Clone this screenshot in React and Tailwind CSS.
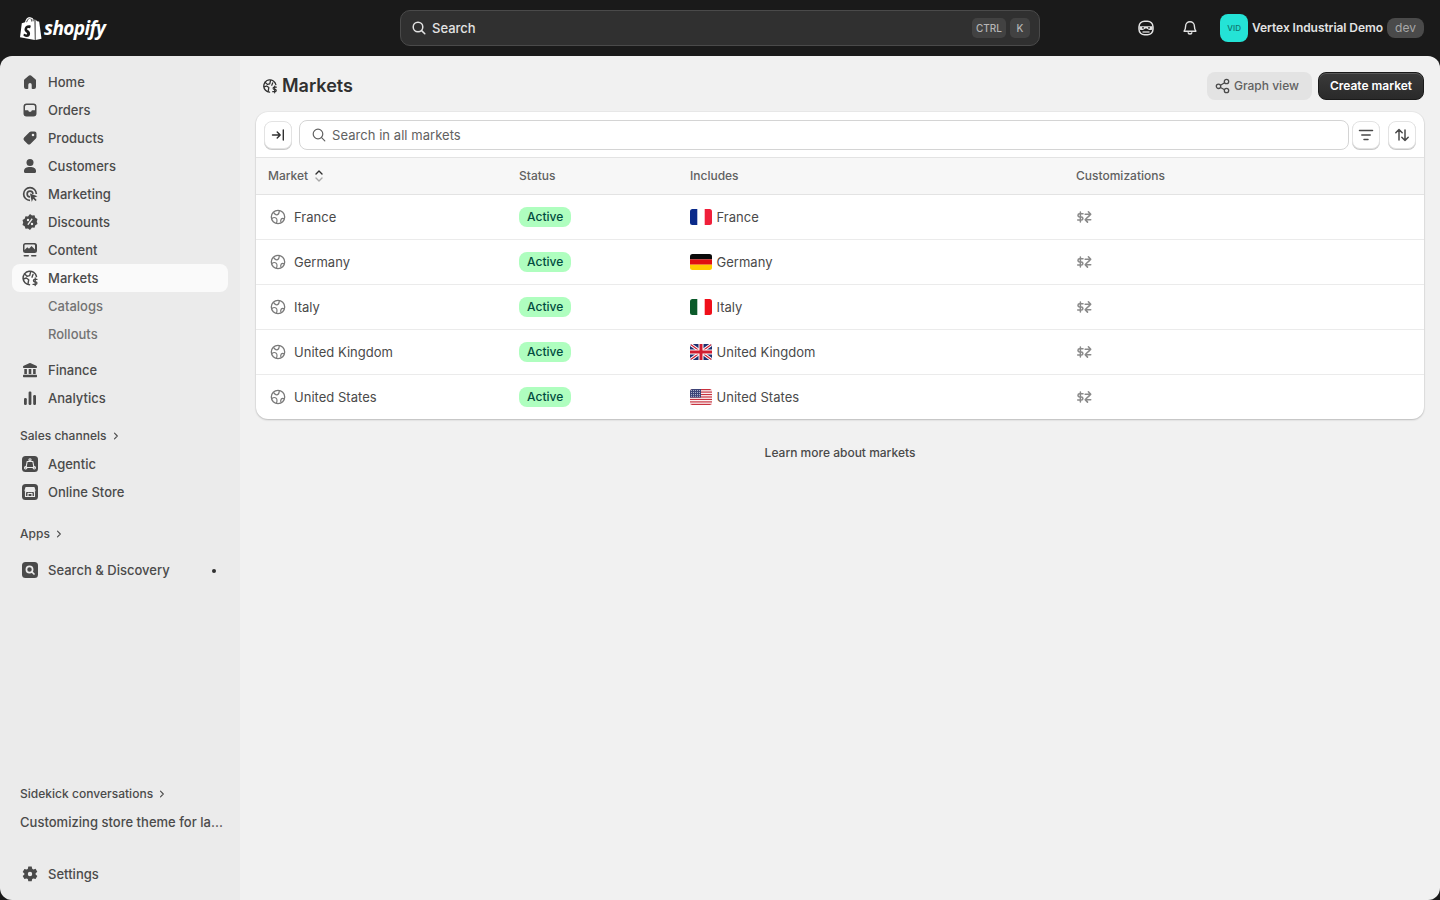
import React from "react";

const I = ({ children, className = "", size = 20, vb = "0 0 20 20" }) => (
  <svg width={size} height={size} viewBox={vb} className={"shrink-0 " + className} fill="currentColor">{children}</svg>
);

const Home = () => <I><path d="M9 3.600a1.600 1.600 0 0 1 2 0l4.400 3.600c.4.300.6.800.6 1.300V15a2 2 0 0 1-2 2h-1.500a.8.800 0 0 1-.8-.8v-3.400a1.700 1.700 0 0 0-3.400 0v3.400a.8.800 0 0 1-.8.800H6a2 2 0 0 1-2-2V8.500c0-.5.200-1 .6-1.300z" /></I>;
const Orders = () => <I><path fillRule="evenodd" d="M6.500 3.500h7a3 3 0 0 1 3 3v7a3 3 0 0 1-3 3h-7a3 3 0 0 1-3-3v-7a3 3 0 0 1 3-3M5 6.500v3.700h2.500c.7 0 1 .4 1.200 1l.2.500h2.200l.2-.5c.2-.6.500-1 1.200-1H15V6.500A1.500 1.500 0 0 0 13.500 5h-7A1.500 1.500 0 0 0 5 6.500" /></I>;
const Products = () => <I><path fillRule="evenodd" d="M11 3.500h3.500a2 2 0 0 1 2 2V9c0 .5-.2 1-.6 1.400l-5.500 5.500a2 2 0 0 1-2.800 0l-3.500-3.500a2 2 0 0 1 0-2.800l5.500-5.500c.4-.4.900-.6 1.400-.6m2 4.800a1.300 1.300 0 1 0 0-2.600 1.300 1.300 0 0 0 0 2.600" /></I>;
const Customers = () => <I><circle cx="10" cy="6.500" r="3.500" /><path d="M4 15c0-2.600 2.400-4 6-4s6 1.400 6 4v.5a1.500 1.500 0 0 1-1.500 1.500h-9A1.500 1.500 0 0 1 4 15.500z" /></I>;
const Marketing = () => <I>
  <path d="M10 2.800a7.200 7.200 0 0 1 7.200 7.200h-1.700A5.500 5.500 0 1 0 10 15.500v1.700a7.200 7.200 0 0 1 0-14.400" />
  <path d="M10 6.300A3.700 3.700 0 0 1 13.700 10H12a2 2 0 1 0-2 2v1.700a3.700 3.700 0 0 1 0-7.400" />
  <path d="m10 9.500 7.500 2.700-3.200 1.300 2.400 2.400-1.200 1.200-2.400-2.400-1.300 3.200z" />
</I>;
const Discounts = () => <I><path fillRule="evenodd" d="m10 2 2 1.500 2.500-.2.800 2.400 2.200 1.300-.7 2.500.7 2.500-2.200 1.300-.8 2.400-2.500-.2L10 18l-2-1.500-2.500.2-.8-2.400-2.200-1.300.7-2.500-.7-2.500 2.200-1.300.8-2.400 2.500.2zM8 6.800a1.200 1.200 0 1 0 0 2.400 1.200 1.200 0 0 0 0-2.400m4 4a1.200 1.200 0 1 0 0 2.400 1.200 1.200 0 0 0 0-2.400m.700-3.500-1-1-4.400 5.900 1 1z" /></I>;
const Content = () => <I><path fillRule="evenodd" d="M5.500 3h9A2.500 2.500 0 0 1 17 5.500v5a2.500 2.500 0 0 1-2.500 2.500h-9A2.500 2.500 0 0 1 3 10.500v-5A2.500 2.500 0 0 1 5.500 3m-1 7 2.800-2.800 1.700 1.600 2.500-2.800 3.500 3.500V5.500a1 1 0 0 0-1-1h-8.500a1 1 0 0 0-1 1z" /><rect x="3.500" y="15" width="5.500" height="1.600" rx=".8" /><rect x="11" y="15" width="5.500" height="1.600" rx=".8" /></I>;
const Globe = ({ size = 20 }) => (
  <svg width={size} height={size} viewBox="0 0 20 20" fill="none" stroke="currentColor" className="shrink-0">
    <path strokeWidth="1.500" strokeLinecap="round" d="M16.500 8.500A6.800 6.800 0 1 0 9.500 16.800" />
    <path strokeWidth="1.400" strokeLinecap="round" strokeLinejoin="round" d="M4.500 5.800 7 8.200l2.700-.6.900-3.700M3.500 11l2.800-1 2.400 1.800-.7 3.800M13 6.500l-1 2.700" />
    <path strokeWidth="1.300" strokeLinecap="round" strokeLinejoin="round" d="M17 11.300h-2.300a1.200 1.200 0 0 0 0 2.500h1a1.200 1.200 0 0 1 0 2.500H13M15.200 10v7.600" />
  </svg>
);
const Finance = () => <I><path d="M9.200 3.200a2 2 0 0 1 1.600 0l5.500 2.600c.5.200.7.600.7 1v.5c0 .4-.3.700-.7.700H3.700a.7.700 0 0 1-.7-.7v-.5c0-.4.200-.8.700-1z" /><rect x="4.300" y="9" width="2.600" height="5" /><rect x="8.700" y="9" width="2.600" height="5" /><rect x="13.100" y="9" width="2.600" height="5" /><rect x="3" y="14.800" width="14" height="2.400" rx=".6" /></I>;
const Analytics = () => <I><rect x="4" y="10" width="2.800" height="7" rx="1.200" /><rect x="8.600" y="3.500" width="2.800" height="13.500" rx="1.200" /><rect x="13.200" y="7" width="2.800" height="10" rx="1.200" /></I>;
const Settings = () => <I><path fillRule="evenodd" d="M8.300 2.500h3.400l.5 2.200 1.200.7 2.200-.7 1.700 3-1.700 1.500v1.400l1.700 1.500-1.700 3-2.200-.7-1.200.7-.5 2.200H8.300l-.5-2.200-1.200-.7-2.200.7-1.700-3 1.700-1.500V9.400L2.700 7.900l1.700-3 2.200.7 1.200-.7zM10 12.200a2.200 2.200 0 1 0 0-4.400 2.200 2.200 0 0 0 0 4.400" /></I>;
const AppTile = ({ children }) => (
  <svg width="16" height="16" viewBox="0 0 16 16" className="shrink-0"><rect width="16" height="16" rx="3.500" fill="#4a4a4a" />{children}</svg>
);
const Agentic = () => <AppTile><g fill="none" stroke="#ebebeb" strokeWidth="1.100"><path d="M5.200 5.500h5.600l1.200 6H4z" /><circle cx="8" cy="3.800" r="1.100" /><circle cx="3.700" cy="11.800" r="1.200" /><circle cx="12.300" cy="11.800" r="1.200" /></g></AppTile>;
const Store = () => <AppTile><g fill="none" stroke="#ebebeb" strokeWidth="1.100"><path d="M3.500 7.500v5h9v-5" /><path d="M4 3.500h8l1 3a1.400 1.400 0 0 1-2.500.6 1.700 1.700 0 0 1-2.500 0 1.700 1.700 0 0 1-2.500 0A1.400 1.400 0 0 1 3 6.500z" fill="#ebebeb" /><path d="M6 12.500V9.500h4v3" /></g></AppTile>;
const SearchTile = () => <AppTile><circle cx="7.500" cy="7.500" r="3.100" fill="none" stroke="#ebebeb" strokeWidth="1.700" /><path d="m10 10 2 2" stroke="#ebebeb" strokeWidth="1.700" strokeLinecap="round" /></AppTile>;

const Mag = ({ size = 16, w = 1.500 }) => (
  <svg width={size} height={size} viewBox="0 0 16 16" fill="none" stroke="currentColor" strokeWidth={w} strokeLinecap="round" className="shrink-0"><circle cx="7" cy="7" r="4.800" /><path d="m10.600 10.600 3.200 3.200" /></svg>
);
const Chev = () => (
  <svg width="8" height="8" viewBox="0 0 8 8" fill="none" stroke="currentColor" strokeWidth="1.100" strokeLinecap="round" strokeLinejoin="round" className="shrink-0"><path d="m2.500 1.200 2.800 2.800-2.800 2.800" /></svg>
);

const NavItem = ({ icon, label, active, dot }) => (
  <div className={"h-7 flex items-center rounded-lg pl-2 pr-3 " + (active ? "bg-[#fafafa]" : "")}>
    <span className="w-5 h-5 flex items-center justify-center text-[#4a4a4a]">{icon}</span>
    <span className="ml-2 pt-[2px] text-[13px] font-[450] tracking-[0.02px] text-[#4a4a4a]">{label}</span>
    {dot && <span className="ml-auto mt-[2px] w-1 h-1 rounded-full bg-[#303030]" />}
  </div>
);
const SubItem = ({ label }) => (
  <div className="h-7 flex items-center pl-9 pt-[2px] text-[13px] font-[450] text-[#737373]">{label}</div>
);
const SectionHead = ({ label }) => (
  <div className="h-7 flex items-center gap-[5px] pl-2 text-[12px] font-[450] tracking-[0.02px] text-[#4a4a4a]">{label}<Chev /></div>
);

const FlagWrap = ({ children }) => (
  <svg width="22" height="16" viewBox="0 0 22 16" className="shrink-0"><defs><clipPath id="fc"><rect width="22" height="16" rx="2.500" /></clipPath></defs><g clipPath="url(#fc)">{children}</g></svg>
);
const Fr = () => <FlagWrap><rect width="22" height="16" fill="#fff" /><rect width="7.300" height="16" fill="#0a2a8a" /><rect x="14.700" width="7.300" height="16" fill="#f01f3a" /></FlagWrap>;
const De = () => <FlagWrap><rect width="22" height="5.400" fill="#0a0a0a" /><rect y="5.400" width="22" height="5.300" fill="#e01010" /><rect y="10.700" width="22" height="5.300" fill="#ffcc00" /></FlagWrap>;
const It = () => <FlagWrap><rect width="22" height="16" fill="#fff" /><rect width="7.300" height="16" fill="#0b5a2a" /><rect x="14.700" width="7.300" height="16" fill="#f00f1a" /></FlagWrap>;
const Uk = () => <FlagWrap><rect width="22" height="16" fill="#1f2f6f" /><path d="M0 0l22 16M22 0 0 16" stroke="#fff" strokeWidth="3.200" /><path d="M0 0l22 16M22 0 0 16" stroke="#d01c30" strokeWidth="1.200" /><path d="M11 0v16M0 8h22" stroke="#fff" strokeWidth="5" /><path d="M11 0v16M0 8h22" stroke="#d01c30" strokeWidth="3" /></FlagWrap>;
const Us = () => <FlagWrap><rect width="22" height="16" fill="#fff" />{[0, 2.460, 4.920, 7.380, 9.840, 12.300, 14.760].map((y) => <rect key={y} y={y} width="22" height="1.230" fill="#c8323f" />)}<rect width="11" height="8.600" fill="#3d4478" /><path d="M1 1.500h9M1 3.500h9M1 5.500h9M1 7.300h9" stroke="#c9cce0" strokeWidth=".8" strokeDasharray="1 1" /></FlagWrap>;

const RowGlobe = () => (
  <svg width="16" height="16" viewBox="0 0 16 16" fill="none" stroke="#7a7a7a" className="shrink-0"><circle cx="8" cy="8" r="6.700" strokeWidth="1.300" /><path d="M3.400 3.400c1 1.500 2.200 2.600 3.600 2.400 1.500-.2 2.200-2 2.300-4.200M1.600 9.800c1.500-1.200 3-1.700 4.300-.9 1.300.8 1.300 2.900.6 5.300M14.300 9.800c-1.200-.7-2.300-.6-3 .2-.7.800-.7 2.200-.4 3.400" strokeWidth="1.200" /></svg>
);
const Custom = () => (
  <svg width="16" height="16" viewBox="0 0 16 16" fill="none" stroke="#8a8a8a" strokeLinecap="round" strokeLinejoin="round" className="shrink-0">
    <path d="M7 4.700H3.600a1.600 1.600 0 0 0 0 3.200h1.700a1.600 1.600 0 0 1 0 3.200H1.700M4.400 3v10" strokeWidth="1.500" />
    <path d="M9.200 5.200h5.400M12.400 2.800l2.300 2.400-2.300 2.400M14.700 10.700H9.300M11.500 8.300l-2.300 2.400 2.300 2.400" strokeWidth="1.600" />
  </svg>
);

const COLS = "grid grid-cols-[251px_171px_386.500px_1fr] items-center";
const rows = [
  ["France", <Fr />],
  ["Germany", <De />],
  ["Italy", <It />],
  ["United Kingdom", <Uk />],
  ["United States", <Us />],
];

const Row = ({ name, flag, last }) => (
  <div className={COLS + " pl-3 text-[13px] tracking-[0.02px] text-[#4a4a4a] " + (last ? "h-[44px]" : "h-[45px] border-b border-[#ebebeb]")}>
    <div className="flex items-center gap-2 pl-[2px]"><RowGlobe /><span className="pt-[2px]">{name}</span></div>
    <div><span className="inline-flex items-center h-5 px-2 mb-[1px] rounded-lg bg-[#affebf] text-[12px] font-[550] text-[#014b40]">Active</span></div>
    <div className="flex items-center gap-[4.500px]">{flag}<span className="pt-[2px]">{name}</span></div>
    <div className="ml-[-1px]"><Custom /></div>
  </div>
);

const IconBtn = ({ children, className = "" }) => (
  <div className={"w-7 h-7 flex items-center justify-center rounded-lg bg-white border border-[#e3e3e3] shadow-[0_1px_0_#c9c9c9] text-[#303030] " + className}>{children}</div>
);

export default function App() {
  return (
    <div className="h-[900px] bg-[#1a1a1a] flex flex-col overflow-hidden font-['Inter',sans-serif]">
      <header className="h-14 shrink-0 grid grid-cols-[400px_640px_1fr] items-center">
        <div className="flex items-center pl-5">
          <svg width="22" height="25" viewBox="0 0 22 25" className="shrink-0">
            <path fill="#fff" d="M1.800 7.200 5 6.200C5.600 3.400 7.300 1 9.600 1c.5 0 .9.200 1.300.5 1.200 0 2.100.9 2.600 2.300l1-.3L14.800 24 0 21.300z" />
            <path fill="#fff" d="M15.500 3.600 17.100 5.200l1.800.2.300.3L21.500 22.700 15.600 24z" />
            <path fill="#1a1a1a" d="M10.900 9.800 10.100 12.300s-.8-.4-1.700-.4c-1.400 0-1.400.9-1.400 1.100 0 1.200 3.100 1.600 3.100 4.400 0 2.200-1.400 3.600-3.300 3.600-2.200 0-3.400-1.400-3.400-1.400l.6-2s1.200 1 2.200 1c.6 0 .9-.5.900-.9 0-1.500-2.600-1.600-2.600-4.200 0-2.100 1.500-4.200 4.600-4.200 1.200 0 1.700.5 1.700.5Z" />
            <path d="M6.600 6.200C7.200 4.300 8.400 2.600 9.600 2.200M10.800 2.600c.8.800 1 2.100 1 3M12.800 3.600c.3.500.5 1 .6 1.600" fill="none" stroke="#1a1a1a" strokeWidth=".8" />
          </svg>
          <span className="ml-[2px] text-white text-[19px] leading-none font-bold italic tracking-[-0.6px] font-['Open_Sans',sans-serif]">shopify</span>
        </div>
        <div className="h-9 rounded-[10px] bg-[#303030] border border-[#4a4a4a] flex items-center pl-[10px] pr-[9px] text-[#e3e3e3]">
          <Mag />
          <span className="ml-[5px] pt-[2px] text-[13px] font-[450]">Search</span>
          <div className="ml-auto flex items-center gap-1 text-[10px] font-medium text-[#b5b5b5]">
            <span className="h-5 px-[4px] rounded-[5px] bg-[#424242] flex items-center">CTRL</span>
            <span className="h-5 w-5 rounded-[5px] bg-[#424242] flex items-center justify-center">K</span>
          </div>
        </div>
        <div className="flex items-center justify-end pr-4">
          <svg width="18" height="18" viewBox="0 0 18 18" className="shrink-0 mr-[26px]"><rect x="2" y="2.200" width="14" height="13.600" rx="5.500" fill="none" stroke="#e3e3e3" strokeWidth="1.500" /><path d="M2.500 7.200h13v2.300a1.600 1.600 0 0 1-1.600 1.600h-1.700L9 9.200l-3.200 1.900H4.100a1.600 1.600 0 0 1-1.600-1.600z" fill="#e3e3e3" /><circle cx="6" cy="8.800" r=".9" fill="#1a1a1a" /><circle cx="12" cy="8.800" r=".9" fill="#1a1a1a" /><path d="M5.500 13h7" stroke="#e3e3e3" strokeWidth="1.300" /></svg>
          <svg width="18" height="18" viewBox="0 0 18 18" fill="none" stroke="#e3e3e3" strokeWidth="1.400" strokeLinejoin="round" className="shrink-0 mr-[21px]"><path d="M4.600 7.200a4.400 4.400 0 0 1 8.800 0c0 2.600.6 3.700 1.500 5H3.100c.9-1.300 1.500-2.400 1.500-5Z" /><path d="M7.200 13.200a1.800 1.800 0 0 0 3.600 0" /></svg>
          <div className="w-7 h-7 rounded-lg bg-[#24e3d6] flex items-center justify-center text-[8px] font-medium text-[#0f766e]">VID</div>
          <span className="ml-1 text-[12px] font-semibold text-[#e3e3e3] tracking-[-0.06px]">Vertex Industrial Demo</span>
          <span className="ml-1 h-5 w-[37px] rounded-lg bg-[#4a4a4a] flex items-center justify-center text-[12px] text-[#a8a8a8]">dev</span>
        </div>
      </header>
      <div className="flex-1 min-h-0 flex rounded-xl overflow-hidden">
        <aside className="w-60 shrink-0 bg-[#ebebeb] flex flex-col pt-3 pb-3 px-3">
          <NavItem icon={<Home />} label="Home" />
          <NavItem icon={<Orders />} label="Orders" />
          <NavItem icon={<Products />} label="Products" />
          <NavItem icon={<Customers />} label="Customers" />
          <NavItem icon={<Marketing />} label="Marketing" />
          <NavItem icon={<Discounts />} label="Discounts" />
          <NavItem icon={<Content />} label="Content" />
          <NavItem icon={<Globe />} label="Markets" active />
          <SubItem label="Catalogs" />
          <SubItem label="Rollouts" />
          <div className="h-2" />
          <NavItem icon={<Finance />} label="Finance" />
          <NavItem icon={<Analytics />} label="Analytics" />
          <div className="h-[10px]" />
          <SectionHead label="Sales channels" />
          <NavItem icon={<Agentic />} label="Agentic" />
          <NavItem icon={<Store />} label="Online Store" />
          <div className="h-[14px]" />
          <SectionHead label="Apps" />
          <div className="h-2" />
          <NavItem icon={<SearchTile />} label="Search & Discovery" dot />
          <div className="mt-auto">
            <div className="pt-[2px]"><SectionHead label="Sidekick conversations" /></div>
            <div className="h-7 flex items-center pl-2 pt-[2px] text-[13px] font-[450] tracking-[0.02px] text-[#4a4a4a] whitespace-nowrap">Customizing store theme for la...</div>
            <div className="h-[24px]" />
            <NavItem icon={<Settings />} label="Settings" />
          </div>
        </aside>
        <main className="flex-1 min-w-0 bg-[#f1f1f1] pt-4 pl-4 pr-4">
          <div className="h-7 flex items-center justify-between">
            <div className="flex items-center gap-[3px] pl-[5px] text-[#303030]">
              <Globe size={18} />
              <h1 className="mt-[-1px] text-[18px] font-semibold tracking-[-0.02px] text-[#303030]">Markets</h1>
            </div>
            <div className="flex items-center gap-[6px]">
              <div className="h-7 w-[105px] pl-[8px] rounded-lg bg-[#e3e3e3] flex items-center gap-[3px] text-[12px] font-[550] text-[#616161]">
                <svg width="16" height="16" viewBox="0 0 16 16" fill="none" stroke="#4a4a4a" strokeWidth="1.300" className="shrink-0"><circle cx="3.500" cy="8.300" r="2.200" /><circle cx="11.500" cy="3.500" r="2.200" /><circle cx="11.500" cy="12.500" r="2.200" /><path d="M5.500 7.200 9.600 4.700M5.500 9.500l4.100 2.200" /></svg>
                Graph view
              </div>
              <div className="h-7 w-[106px] justify-center rounded-lg bg-gradient-to-b from-[#3a3a3a] to-[#2a2a2a] border border-[#1a1a1a] shadow-[inset_0_1px_0_#5a5a5a] flex items-center text-[12px] font-semibold text-white">Create market</div>
            </div>
          </div>
          <section className="mt-3 bg-white rounded-xl shadow-[0_1px_2px_rgba(0,0,0,0.2),0_0_0_1px_rgba(0,0,0,0.03)] overflow-hidden">
            <div className="h-[46px] flex items-center gap-2 px-2 border-b border-[#e3e3e3]">
              <IconBtn className="shrink-0">
                <svg width="16" height="16" viewBox="0 0 16 16" fill="none" stroke="#303030" strokeWidth="1.400" strokeLinecap="round" strokeLinejoin="round"><path d="M2.500 8h7.500M7.200 5l3 3-3 3M13.300 3v10" /></svg>
              </IconBtn>
              <div className="ml-[-1px] flex-1 h-[30px] rounded-lg border border-[#d4d4d4] flex items-center pl-[11px] text-[#616161]">
                <Mag size={16} w={1.200} />
                <span className="ml-[5px] pt-[2px] text-[13px] tracking-[0.05px] text-[#616161]">Search in all markets</span>
              </div>
              <div className="flex gap-2 ml-[-5px]">
                <IconBtn>
                  <svg width="16" height="16" viewBox="0 0 16 16" fill="none" stroke="#4a4a4a" strokeWidth="1.500" strokeLinecap="round"><path d="M1.500 3.500h13M3.800 8h8.400M6 12.500h4" /></svg>
                </IconBtn>
                <IconBtn>
                  <svg width="16" height="16" viewBox="0 0 16 16" fill="none" stroke="#4a4a4a" strokeWidth="1.500" strokeLinecap="round" strokeLinejoin="round"><path d="M5 13V2.500M1.800 5.700 5 2.500l3.200 3.200M11 3v10.500M7.800 10.300l3.200 3.200 3.200-3.200" /></svg>
                </IconBtn>
              </div>
            </div>
            <div className={COLS + " h-[37px] pl-3 bg-[#f7f7f7] border-b border-[#e3e3e3] text-[12px] font-[550] text-[#616161]"}>
              <div className="flex items-center gap-[5px]">Market
                <svg width="12" height="16" viewBox="0 0 12 16" fill="none" strokeLinecap="round" strokeLinejoin="round" strokeWidth="1.400"><path d="M3 6 6 3l3 3" stroke="#303030" /><path d="M3 10 6 13l3-3" stroke="#a8a8a8" /></svg>
              </div>
              <div>Status</div>
              <div>Includes</div>
              <div className="ml-[-0.500px]">Customizations</div>
            </div>
            {rows.map(([n, f], i) => <Row key={n} name={n} flag={f} last={i === rows.length - 1} />)}
          </section>
          <p className="mt-[25px] text-center text-[12px] font-[450] text-[#4a4a4a]">Learn more about markets</p>
        </main>
      </div>
    </div>
  );
}
